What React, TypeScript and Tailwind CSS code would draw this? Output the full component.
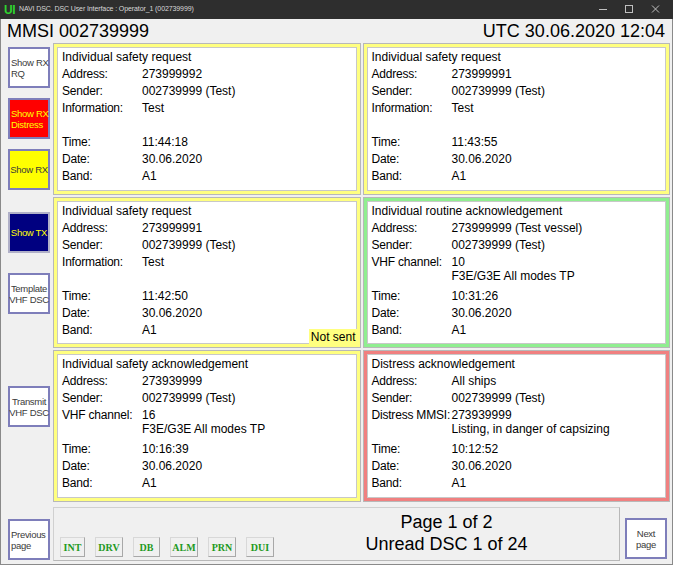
import React from "react";

type Row = { label: string; value: string; value2?: string };
type PanelData = { bg: string; title: string; rows: Row[]; notSent?: boolean };

const panels: PanelData[] = [
  {
    bg: "bg-[#ffff80]",
    title: "Individual safety request",
    rows: [
      { label: "Address:", value: "273999992" },
      { label: "Sender:", value: "002739999 (Test)" },
      { label: "Information:", value: "Test", value2: "" },
      { label: "Time:", value: "11:44:18" },
      { label: "Date:", value: "30.06.2020" },
      { label: "Band:", value: "A1" },
    ],
  },
  {
    bg: "bg-[#ffff80]",
    title: "Individual safety request",
    rows: [
      { label: "Address:", value: "273999991" },
      { label: "Sender:", value: "002739999 (Test)" },
      { label: "Information:", value: "Test", value2: "" },
      { label: "Time:", value: "11:43:55" },
      { label: "Date:", value: "30.06.2020" },
      { label: "Band:", value: "A1" },
    ],
  },
  {
    bg: "bg-[#ffff80]",
    title: "Individual safety request",
    notSent: true,
    rows: [
      { label: "Address:", value: "273999991" },
      { label: "Sender:", value: "002739999 (Test)" },
      { label: "Information:", value: "Test", value2: "" },
      { label: "Time:", value: "11:42:50" },
      { label: "Date:", value: "30.06.2020" },
      { label: "Band:", value: "A1" },
    ],
  },
  {
    bg: "bg-[#90ee90]",
    title: "Individual routine acknowledgement",
    rows: [
      { label: "Address:", value: "273999999 (Test vessel)" },
      { label: "Sender:", value: "002739999 (Test)" },
      { label: "VHF channel:", value: "10", value2: "F3E/G3E All modes TP" },
      { label: "Time:", value: "10:31:26" },
      { label: "Date:", value: "30.06.2020" },
      { label: "Band:", value: "A1" },
    ],
  },
  {
    bg: "bg-[#ffff80]",
    title: "Individual safety acknowledgement",
    rows: [
      { label: "Address:", value: "273939999" },
      { label: "Sender:", value: "002739999 (Test)" },
      { label: "VHF channel:", value: "16", value2: "F3E/G3E All modes TP" },
      { label: "Time:", value: "10:16:39" },
      { label: "Date:", value: "30.06.2020" },
      { label: "Band:", value: "A1" },
    ],
  },
  {
    bg: "bg-[#f08080]",
    title: "Distress acknowledgement",
    rows: [
      { label: "Address:", value: "All ships" },
      { label: "Sender:", value: "002739999 (Test)" },
      { label: "Distress MMSI:", value: "273939999", value2: "Listing, in danger of capsizing" },
      { label: "Time:", value: "10:12:52" },
      { label: "Date:", value: "30.06.2020" },
      { label: "Band:", value: "A1" },
    ],
  },
];

function Panel({ p }: { p: PanelData }) {
  return (
    <div className={`relative border border-[#b8b8b8] p-[3px] ${p.bg}`}>
      <div className="h-full bg-white border border-[#c8c8c8] pl-[4px] pt-[1px] text-[12px] leading-[17px] text-black">
        <div className="whitespace-nowrap">{p.title}</div>
        {p.rows.map((r, i) => (
          <div key={i} className={`flex ${r.value2 !== undefined ? "h-[34px]" : "h-[17px]"}`}>
            <div className="w-[80px] shrink-0 whitespace-nowrap tracking-[-0.2px]">{r.label}</div>
            <div className="whitespace-nowrap">
              <div>{r.value}</div>
              {r.value2 !== undefined && <div className="leading-[11px]">{r.value2}</div>}
            </div>
          </div>
        ))}
      </div>
      {p.notSent && (
        <div className="absolute right-[2px] bottom-[1px] bg-[#ffff80] px-[2px] text-[12px] leading-[17px] text-black">
          Not sent
        </div>
      )}
    </div>
  );
}

function SideButton({
  children,
  cls,
  align,
}: {
  children: React.ReactNode;
  cls: string;
  align: string;
}) {
  return (
    <div
      className={`w-[42px] h-[41px] border-2 flex flex-col justify-center whitespace-nowrap text-[9.5px] leading-[11px] tracking-[-0.3px] ${cls} ${align}`}
    >
      {children}
    </div>
  );
}

function SmallBtn({ label, w }: { label: string; w: string }) {
  return (
    <div
      className={`${w} h-[20px] flex items-center justify-center bg-[#f0f0f0] border border-[#d8d8d8] border-r-[#a8a8a8] border-b-[#a8a8a8] text-[10px] font-bold text-[#1e9a1e] font-['Liberation_Serif',serif]`}
    >
      {label}
    </div>
  );
}

export default function App() {
  return (
    <div className="w-[673px] h-[565px] bg-[#f0f0f0] flex flex-col overflow-hidden font-['Liberation_Sans',Arial,sans-serif] text-black">
      {/* Title bar */}
      <div className="h-[19px] shrink-0 bg-[#2e2e2e] flex items-center relative">
        <div className="ml-[4px] text-[12px] leading-[12px] font-bold text-[#2fd42f] tracking-[-0.5px]">UI</div>
        <div className="ml-[4px] text-[7px] text-[#d8d8d8] whitespace-nowrap tracking-[-0.1px]">
          NAVI DSC. DSC User Interface : Operator_1 (002739999)
        </div>
        <div className="ml-auto flex items-center">
          <svg width="26" height="19" viewBox="0 0 26 19">
            <line x1="4" y1="9.5" x2="12" y2="9.5" stroke="#c0c0c0" strokeWidth="1" />
          </svg>
          <svg width="26" height="19" viewBox="0 0 26 19">
            <rect x="4.5" y="5.5" width="7" height="7" fill="none" stroke="#c0c0c0" strokeWidth="1" />
          </svg>
          <svg width="26" height="19" viewBox="0 0 26 19">
            <path d="M5 5.5 L12 12.5 M12 5.5 L5 12.5" stroke="#c0c0c0" strokeWidth="1" />
          </svg>
        </div>
      </div>

      {/* Header */}
      <div className="h-[24px] shrink-0 flex items-center justify-between pl-[6px] pr-[7px] border-l border-r border-[#8a8a8a] text-[18px] leading-[22px]">
        <span>MMSI 002739999</span>
        <span>UTC 30.06.2020 12:04</span>
      </div>

      {/* Body */}
      <div className="flex-1 flex border-l border-r border-b border-[#8a8a8a]">
        {/* Left column */}
        <div className="w-[52px] shrink-0 flex flex-col pl-[7px]">
          <div className="mt-[4px]">
            <SideButton cls="bg-white border-[#7e7eba] text-[#3a3a3a]" align="items-start pl-[1px]">
              <span>Show RX</span>
              <span>RQ</span>
            </SideButton>
          </div>
          <div className="mt-[10px]">
            <SideButton cls="bg-[#ff0000] border-[#7e7eba] text-[#ffff00]" align="items-start pl-[1px]">
              <span>Show RX</span>
              <span>Distress</span>
            </SideButton>
          </div>
          <div className="mt-[10px]">
            <SideButton cls="bg-[#ffff00] border-[#7e7eba] text-[#3a3a3a]" align="items-center">
              <span>Show RX</span>
            </SideButton>
          </div>
          <div className="mt-[22px]">
            <SideButton cls="bg-[#000080] border-[#b0b0c8] text-[#ffff00]" align="items-center">
              <span>Show TX</span>
            </SideButton>
          </div>
          <div className="mt-[20px]">
            <SideButton cls="bg-white border-[#7e7eba] text-[#3a3a3a]" align="items-center">
              <span>Template</span>
              <span>VHF DSC</span>
            </SideButton>
          </div>
          <div className="mt-[72px]">
            <SideButton cls="bg-white border-[#7e7eba] text-[#3a3a3a]" align="items-center">
              <span>Transmit</span>
              <span>VHF DSC</span>
            </SideButton>
          </div>
          <div className="mt-[92px]">
            <SideButton cls="bg-white border-[#7e7eba] text-[#3a3a3a]" align="items-start pl-[1px]">
              <span>Previous</span>
              <span>page</span>
            </SideButton>
          </div>
        </div>

        {/* Right area */}
        <div className="flex-1 mr-[2px] flex flex-col">
          <div className="h-[459px] grid grid-cols-2 grid-rows-3 gap-[2px]">
            {panels.map((p, i) => (
              <Panel key={i} p={p} />
            ))}
          </div>
          <div className="flex items-start mt-[5px]">
            <div className="w-[567px] h-[54px] border border-[#d0d0d0] border-r-[#b8b8b8] border-b-[#b8b8b8] bg-[#f0f0f0] flex">
              <div className="flex items-end gap-[10px] pl-[6px] pb-[3px]">
                <SmallBtn label="INT" w="w-[25px]" />
                <SmallBtn label="DRV" w="w-[28px]" />
                <SmallBtn label="DB" w="w-[27px]" />
                <SmallBtn label="ALM" w="w-[28px]" />
                <SmallBtn label="PRN" w="w-[28px]" />
                <SmallBtn label="DUI" w="w-[28px]" />
              </div>
              <div className="flex-1 flex flex-col items-center pt-[3px] text-[18px] leading-[22px]">
                <div>Page 1 of 2</div>
                <div>Unread DSC 1 of 24</div>
              </div>
            </div>
            <div className="ml-[5px] mt-[11px]">
              <SideButton cls="bg-white border-[#7e7eba] text-[#3a3a3a]" align="items-center">
                <span>Next</span>
                <span>page</span>
              </SideButton>
            </div>
          </div>
        </div>
      </div>
    </div>
  );
}
